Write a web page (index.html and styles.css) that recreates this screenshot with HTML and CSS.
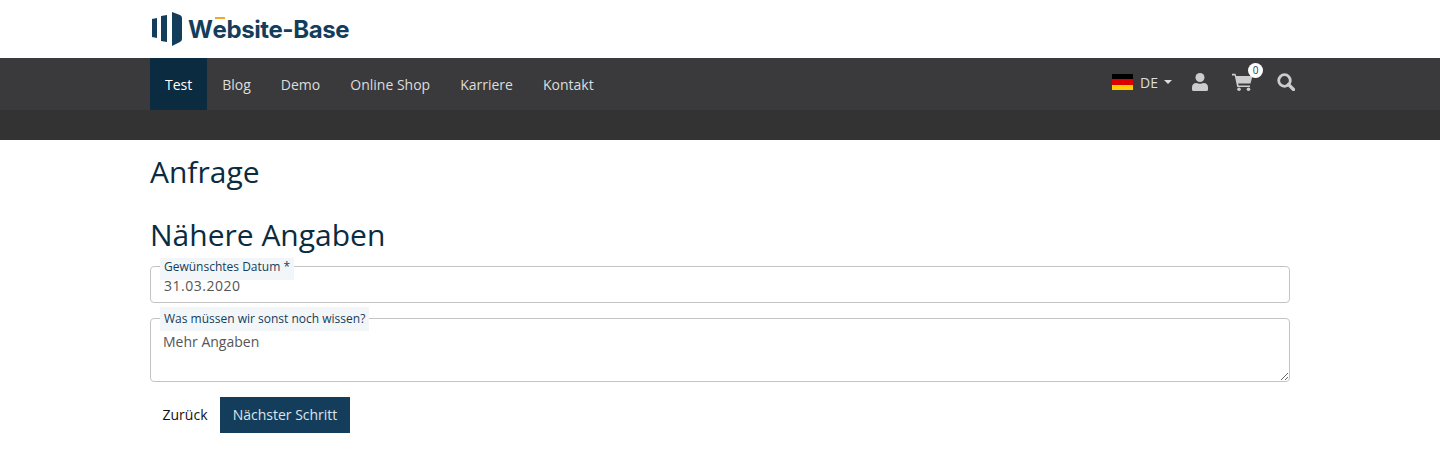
FILE: index.html
```html
<!DOCTYPE html>
<html lang="de">
<head>
    <meta charset="UTF-8">
    <meta name="viewport" content="width=device-width, initial-scale=1.0">
    <title>Anfrage</title>
    <link rel="stylesheet" href="styles.css">
</head>
<body>
    <header class="top">
        <div class="container">
            <a class="logo" href="#">
                <svg class="logo-mark" width="32" height="36" viewBox="0 0 32 36">
                    <path d="M2 8 7 7V27L2 26Z" fill="#143d5b"/>
                    <path d="M11 5 17 4V31L11 30Z" fill="#143d5b"/>
                    <path d="M22 1 30 4Q32 5 32 7V28Q32 30 30 31L22 35Z" fill="#143d5b"/>
                </svg>
                <span class="logo-text"><span class="logo-e">e</span></span>
            </a>
        </div>
    </header>

    <nav class="navbar">
        <div class="container nav-row">
            <ul class="nav-links">
                <li><a class="active" href="#">Test</a></li>
                <li><a href="#">Blog</a></li>
                <li><a href="#">Demo</a></li>
                <li><a href="#">Online Shop</a></li>
                <li><a href="#">Karriere</a></li>
                <li><a href="#">Kontakt</a></li>
            </ul>
            <div class="nav-tools">
                <a class="lang" href="#">
                    <span class="flag"></span>
                    <span>DE</span>
                    <span class="caret"></span>
                </a>
                <a class="tool user" href="#">
                    <svg width="16" height="18" viewBox="0 0 16 18"><circle cx="8" cy="4.500" r="4.500" fill="#ccc"/><path d="M0 16.500V14.500Q0 10 4.500 10Q8 11.500 11.500 10Q16 10 16 14.500V16.500Q16 18 14.500 18H1.500Q0 18 0 16.500Z" fill="#ccc"/></svg>
                </a>
                <a class="tool cart" href="#">
                    <svg width="21" height="18" viewBox="0 0 21 18"><path d="M0 .8H3.500L4.200 3H20.500L18.500 10.500H6.200L6.600 12.400H18V14H5.200L2.700 2.400H0Z" fill="#ccc"/><circle cx="7" cy="16.200" r="1.800" fill="#ccc"/><circle cx="16.500" cy="16.200" r="1.800" fill="#ccc"/></svg>
                    <span class="badge">0</span>
                </a>
                <a class="tool search" href="#">
                    <svg width="18" height="18" viewBox="0 0 18 18"><circle cx="7.500" cy="7.500" r="5.800" fill="none" stroke="#ccc" stroke-width="2.800"/><path d="M11.500 11.500 16.500 16.500" stroke="#ccc" stroke-width="3.200" stroke-linecap="round"/></svg>
                </a>
            </div>
        </div>
    </nav>
    <div class="subbar"></div>

    <main class="container">
        <h1>Anfrage</h1>
        <h2>Nähere Angaben</h2>
        <form>
            <div class="field field-input">
                <label for="datum">Gewünschtes Datum *</label>
                <input id="datum" type="text" value="31.03.2020">
            </div>
            <div class="field field-area">
                <label for="mehr">Was müssen wir sonst noch wissen?</label>
                <textarea id="mehr">Mehr Angaben</textarea>
            </div>
            <div class="actions">
                <a class="btn-back" href="#">Zurück</a>
                <button class="btn-next" type="button">Nächster Schritt</button>
            </div>
        </form>
    </main>
</body>
</html>
```

FILE: styles.css
```css
* {
    box-sizing: border-box;
}
body {
    margin: 0;
    font-family: "Open Sans", Arial, sans-serif;
    font-size: 14px;
    color: #0b2b40;
    background-color: #fff;
}
a {
    text-decoration: none;
}
.container {
    width: 1140px;
    margin: 0 auto;
}
.top {
    height: 58px;
}
.top .container {
    height: 58px;
    display: flex;
    align-items: center;
}
.logo {
    display: flex;
    align-items: center;
    gap: 6px;
}
.logo-mark {
    display: block;
}
.logo-text {
    font-family: Inter, Arial, sans-serif;
    font-weight: 700;
    font-size: 24px;
    letter-spacing: -0.4px;
    color: #143d5b;
}
.logo-text::before {
    content: "W";
}
.logo-text::after {
    content: "bsite-Base";
}
.logo-e {
    position: relative;
}
.logo-e::before {
    content: "";
    position: absolute;
    left: 2px;
    top: 2px;
    width: 10px;
    height: 2px;
    background-color: #f0a830;
}
.navbar {
    height: 52px;
    background-color: #3a3a3c;
}
.nav-row {
    height: 52px;
    display: flex;
    justify-content: space-between;
}
.nav-links {
    display: flex;
    list-style: none;
    margin: 0;
    padding: 0;
}
.nav-links a {
    display: block;
    height: 52px;
    padding: 0 15px;
    line-height: 54px;
    color: #ddd;
}
.nav-links a.active {
    background-color: #0b2b40;
    color: #fff;
}
.nav-tools {
    display: flex;
    align-items: center;
    margin: -2px -5px 0 0;
    padding-bottom: 2px;
}
.lang {
    display: flex;
    align-items: center;
    color: #ddd;
}
.flag {
    width: 21px;
    height: 16px;
    margin-right: 7px;
    background: linear-gradient(#000 33.3%, #d00 33.3%, #d00 66.6%, #ffce00 66.6%);
}
.caret {
    width: 0;
    height: 0;
    margin-left: 6px;
    border-top: 4px solid #ddd;
    border-left: 4px solid transparent;
    border-right: 4px solid transparent;
}
.tool {
    display: block;
    position: relative;
    height: 18px;
}
.tool svg {
    display: block;
}
.user {
    margin-left: 20px;
}
.cart {
    margin-left: 24px;
}
.search {
    margin-left: 24px;
}
.badge {
    position: absolute;
    top: -10px;
    left: 16px;
    width: 15px;
    height: 15px;
    border-radius: 50%;
    background-color: #fff;
    color: #143d5b;
    font-size: 10px;
    line-height: 15px;
    text-align: center;
}
.subbar {
    height: 30px;
    background-color: #333;
}
h1, h2 {
    margin: 0;
    font-weight: 400;
    font-size: 30px;
    line-height: 36px;
    color: #0b2b40;
}
h1 {
    padding-top: 14px;
}
h2 {
    margin-top: 27px;
}
.field {
    position: relative;
}
.field label {
    position: absolute;
    left: 10px;
    top: -8px;
    padding: 0 4px;
    height: 22px;
    font-size: 12px;
    line-height: 18px;
    color: #143d5b;
    background-color: #f3f6f9;
}
.field-input {
    margin-top: 13px;
}
.field-area {
    margin-top: 15px;
}
.field-area label {
    height: 24px;
    top: -11px;
    line-height: 24px;
}
.field input,
.field textarea {
    display: block;
    width: 100%;
    border: 1px solid #c4c4c4;
    border-radius: 4px;
    font-family: "Open Sans", Arial, sans-serif;
    font-size: 14px;
    color: #555;
    background-color: #fff;
    outline: none;
}
.field input {
    height: 37px;
    padding: 2px 13px 0;
    letter-spacing: 0.5px;
}
.field textarea {
    height: 64px;
    padding: 13px 12px 0;
}
.actions {
    display: flex;
    margin-top: 15px;
}
.btn-back {
    width: 70px;
    height: 36px;
    line-height: 35px;
    text-align: center;
    color: #111;
}
.btn-next {
    width: 130px;
    height: 36px;
    border: none;
    padding: 0 0 2px;
    font-family: "Open Sans", Arial, sans-serif;
    font-size: 14px;
    color: #dde5ea;
    background-color: #143d5b;
}
```
